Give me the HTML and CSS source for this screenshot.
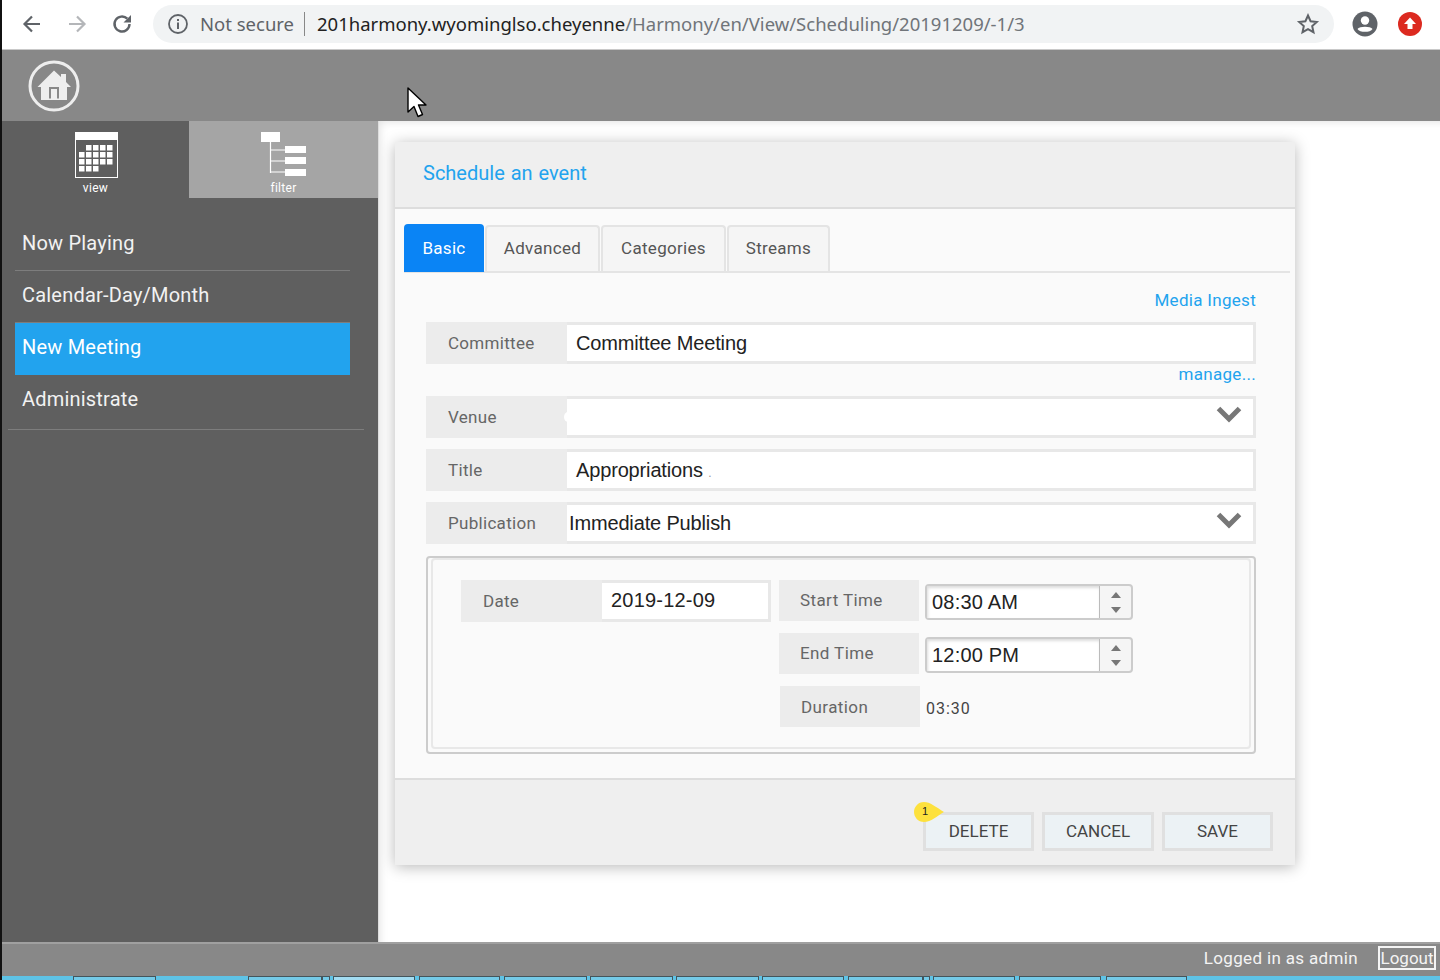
FILE: index.html
```html
<!DOCTYPE html>
<html lang="en">
<head>
<meta charset="utf-8">
<title>Schedule an event</title>
<link rel="stylesheet" href="styles.css">
</head>
<body>
<div class="screen">
  <header class="browser">
    <svg class="nav nav-back" viewBox="0 0 24 24"><path d="M20 12H5M12 4.500 4.500 12l7.500 7.500" fill="none" stroke="#5f6368" stroke-width="2.200"/></svg>
    <svg class="nav nav-forward" viewBox="0 0 24 24"><path d="M4 12h15M12 4.500l7.500 7.500-7.500 7.500" fill="none" stroke="#b4b6b9" stroke-width="2.200"/></svg>
    <svg class="nav nav-reload" viewBox="0 0 24 24"><path d="M19.500 12a7.500 7.500 0 1 1-2.200-5.300" fill="none" stroke="#5f6368" stroke-width="2.400"/><path d="M21 3v7.500h-7.500z" fill="#5f6368"/></svg>
    <div class="omnibox">
      <svg class="info" viewBox="0 0 22 22"><circle cx="11" cy="11" r="9" fill="none" stroke="#5f6368" stroke-width="1.800"/><path d="M10 9.500h2v6.500h-2zM10 6h2v2h-2z" fill="#5f6368"/></svg>
      <span class="secure">Not secure</span>
      <span class="url"><span class="url-host">201harmony.wyominglso.cheyenne</span>/Harmony/en/View/Scheduling/20191209/-1/3</span>
      <svg class="star" viewBox="0 0 24 24"><path d="m12 3.500 2.600 5.700 6.200.7-4.600 4.200 1.300 6.100L12 17.100l-5.500 3.100 1.300-6.100-4.600-4.200 6.200-.7z" fill="none" stroke="#5f6368" stroke-width="2"/></svg>
    </div>
    <svg class="avatar" viewBox="0 0 26 26"><circle cx="13" cy="13" r="12.500" fill="#5f6368"/><circle cx="13" cy="9.500" r="4.200" fill="#fff"/><path d="M5.500 18c2-3 13-3 15 0-2 3.800-13 3.800-15 0z" fill="#fff"/></svg>
    <svg class="update" viewBox="0 0 24 24"><circle cx="12" cy="12" r="12" fill="#dc2a20"/><path d="M12 5.500 18 12h-3.500v5h-5v-5H6z" fill="#fff"/></svg>
  </header>

  <div class="app">
    <div class="topbar">
      <svg class="home" viewBox="0 0 52 52"><circle cx="26" cy="26" r="24" fill="none" stroke="#eee" stroke-width="3"/><path d="M9.500 27 26 10.500l7 6.500v-3h5v8l5 5h-4v13H13V27zM21 38.500h2V29h6v9.500h2V27H21z" fill="#eee" fill-rule="evenodd"/><path d="M25 31h2v7.500h-2z" fill="#eee"/></svg>
    </div>
    <div class="main">
      <aside class="sidebar">
        <div class="side-tabs">
          <div class="side-tab">
            <svg class="ico-cal" viewBox="0 0 44 46">
              <rect x="0.500" y="0.500" width="42" height="45" fill="none" stroke="#fff"/>
              <rect x="0" y="0" width="43" height="8" fill="#fff"/>
              <g fill="#fff">
                <rect x="11" y="13" width="5.500" height="5.500"/><rect x="18" y="13" width="5.500" height="5.500"/><rect x="25" y="13" width="5.500" height="5.500"/><rect x="32" y="13" width="5.500" height="5.500"/>
                <rect x="4" y="20" width="5.500" height="5.500"/><rect x="11" y="20" width="5.500" height="5.500"/><rect x="18" y="20" width="5.500" height="5.500"/><rect x="25" y="20" width="5.500" height="5.500"/><rect x="32" y="20" width="5.500" height="5.500"/>
                <rect x="4" y="27" width="5.500" height="5.500"/><rect x="11" y="27" width="5.500" height="5.500"/><rect x="18" y="27" width="5.500" height="5.500"/><rect x="25" y="27" width="5.500" height="5.500"/><rect x="32" y="27" width="5.500" height="5.500"/>
                <rect x="4" y="34" width="5.500" height="5.500"/><rect x="11" y="34" width="5.500" height="5.500"/><rect x="18" y="34" width="5.500" height="5.500"/>
              </g>
            </svg>
            <span class="side-tab-label">view</span>
          </div>
          <div class="side-tab side-tab-active">
            <svg class="ico-tree" viewBox="0 0 46 46">
              <path d="M9.500 10v31M9.500 18H24M9.500 29H24M9.500 40H24" fill="none" stroke="#fff" stroke-width="1.200"/>
              <g fill="#fff"><rect x="0" y="0" width="19" height="10"/><rect x="24" y="14" width="21" height="7"/><rect x="24" y="25" width="21" height="7"/><rect x="24" y="37" width="21" height="7"/></g>
            </svg>
            <span class="side-tab-label">filter</span>
          </div>
        </div>
        <nav class="menu">
          <a class="menu-item">Now Playing</a>
          <a class="menu-item">Calendar-Day/Month</a>
          <a class="menu-item menu-item-active">New Meeting</a>
          <a class="menu-item menu-item-last">Administrate</a>
        </nav>
      </aside>

      <section class="content">
        <div class="dialog">
          <div class="dialog-head">Schedule an event</div>
          <div class="dialog-body">
            <div class="tabs">
              <span class="tab tab-active tab-basic">Basic</span>
              <span class="tab tab-adv">Advanced</span>
              <span class="tab tab-cat">Categories</span>
              <span class="tab tab-str">Streams</span>
            </div>
            <div class="form">
              <a class="link link-media">Media Ingest</a>
              <div class="row">
                <span class="row-label">Committee</span>
                <span class="row-field">Committee Meeting</span>
              </div>
              <a class="link link-manage">manage...</a>
              <div class="row">
                <span class="row-label row-label-venue">Venue</span>
                <span class="row-field row-field-venue"><svg class="chev" viewBox="0 0 26 18"><path d="M2.500 2.500 13 13 23.500 2.500" fill="none" stroke="#777" stroke-width="5"/></svg></span>
              </div>
              <div class="row row-gap">
                <span class="row-label">Title</span>
                <span class="row-field">Appropriations <span class="faint">.</span></span>
              </div>
              <div class="row row-gap">
                <span class="row-label">Publication</span>
                <span class="row-field row-field-tight">Immediate Publish<svg class="chev" viewBox="0 0 26 18"><path d="M2.500 2.500 13 13 23.500 2.500" fill="none" stroke="#777" stroke-width="5"/></svg></span>
              </div>
              <div class="timebox">
                <div class="timebox-inner">
                  <div class="date-row">
                    <span class="date-label">Date</span>
                    <span class="date-field">2019-12-09</span>
                  </div>
                  <div class="times">
                    <div class="time-row">
                      <span class="time-label">Start Time</span>
                      <div class="spinner">
                        <span class="spinner-value">08:30 AM</span>
                        <span class="spinner-btns"><i class="arrow-up"></i><i class="arrow-down"></i></span>
                      </div>
                    </div>
                    <div class="time-row">
                      <span class="time-label">End Time</span>
                      <div class="spinner">
                        <span class="spinner-value">12:00 PM</span>
                        <span class="spinner-btns"><i class="arrow-up"></i><i class="arrow-down"></i></span>
                      </div>
                    </div>
                    <div class="time-row time-row-duration">
                      <span class="time-label">Duration</span>
                      <span class="duration">03:30</span>
                    </div>
                  </div>
                </div>
              </div>
            </div>
          </div>
          <div class="dialog-foot">
            <button class="btn btn-delete">DELETE<span class="badge"><svg class="badge-shape" viewBox="0 0 32 22"><path d="M11 1c6 0 12 5 20 10-7 4-13 10-20 10C5 21 1 16 1 11S5 1 11 1z" fill="#fde13d"/></svg><span class="badge-num">1</span></span></button>
            <button class="btn btn-cancel">CANCEL</button>
            <button class="btn">SAVE</button>
          </div>
        </div>
      </section>
    </div>
    <footer class="statusbar">
      <span class="status-user">Logged in as admin</span>
      <span class="logout">Logout</span>
    </footer>
    <div class="taskbar">
      <i></i><i class="t"></i><i></i><i class="t"></i><i class="t"></i><i></i><i class="t t-on"></i><i></i><i class="t"></i><i></i><i class="t"></i><i></i><i class="t"></i><i></i><i class="t"></i><i></i><i class="t"></i><i></i><i class="t"></i><i class="t"></i><i></i><i class="t"></i><i></i><i class="t"></i><i></i><i class="t"></i><i></i>
    </div>
  </div>

  <svg class="cursor" viewBox="0 0 20 32"><path d="M1 1v24l6-5.500 4 10 4.500-2-4-9.500H19z" fill="#fff" stroke="#000" stroke-width="1.400" stroke-linejoin="round"/></svg>
</div>
</body>
</html>
```

FILE: styles.css
```css
* { box-sizing: border-box; }
html, body { margin: 0; padding: 0; background: #fff; }
body { font-family: "Roboto", "Liberation Sans", sans-serif; }
.screen { position: relative; width: 1440px; height: 980px; overflow: hidden; border-left: 2px solid #111; }

/* browser chrome */
.browser { height: 50px; background: #fff; border-bottom: 1px solid #c9c9c9; display: flex; align-items: center; padding-bottom: 1px; }
.nav { width: 24px; height: 24px; flex: none; }
.nav-back { margin-left: 18px; }
.nav-forward { margin-left: 21px; }
.nav-reload { margin-left: 21px; }
.omnibox { width: 1181px; height: 38px; margin-left: 19px; border-radius: 19px; background: #f1f3f4; display: flex; align-items: center; padding: 0 14px; flex: none; }
.info { width: 22px; height: 22px; flex: none; }
.secure { font-family: "Noto Sans", sans-serif; font-size: 18.500px; color: #5f6368; margin-left: 11px; width: 105px; white-space: nowrap; border-right: 1px solid #888; line-height: 24px; }
.url { font-family: "Noto Sans", sans-serif; font-size: 18.500px; color: #70757a; margin-left: 12px; white-space: nowrap; flex: 1; padding-bottom: 2px; }
.url-host { color: #222; }
.star { width: 24px; height: 24px; flex: none; }
.avatar { width: 26px; height: 26px; margin-left: 18px; flex: none; }
.update { width: 24px; height: 24px; margin-left: 20px; flex: none; }

/* app frame */
.app { display: flex; flex-direction: column; height: 930px; }
.topbar { height: 71px; background: #888; padding: 10px 0 0 26px; flex: none; }
.home { width: 52px; height: 52px; display: block; }
.main { display: flex; height: 821px; flex: none; }
.sidebar { width: 376px; flex: none; background: #5f5f5f; }
.side-tabs { display: flex; height: 77px; }
.side-tab { display: flex; flex-direction: column; align-items: center; color: #fff; width: 187px; padding-top: 11px; }
.side-tab-active { width: 189px; background: #a5a5a5; }
.ico-cal { width: 44px; height: 46px; flex: none; margin-left: 2px; }
.ico-tree { width: 46px; height: 46px; flex: none; }
.side-tab-label { font-size: 12px; line-height: 14px; margin-top: 3px; letter-spacing: .3px; }
.menu { padding: 21px 14px 0 6px; }
.menu-item { display: block; height: 52px; margin: 0 14px 0 7px; padding: 0 7px; color: #f2f2f2; font-size: 20px; line-height: 48px; letter-spacing: .2px; border-bottom: 1px solid #7d7d7d; white-space: nowrap; }
.menu-item-active { background: #22a3ee; color: #fff; border-bottom: none; }
.menu-item-last { margin: 0; padding: 0 14px; height: 55px; }

/* dialog */
.content { flex: 1; background: #fff; border-left: 1px solid #ddd; padding: 21px 0 0 16px; box-shadow: inset 6px 6px 10px -6px #ddd; }
.dialog { width: 900px; height: 723px; background: #fafafa; box-shadow: 0 2px 14px rgba(0,0,0,.28); display: flex; flex-direction: column; }
.dialog-head { height: 67px; background: #efefef; border-bottom: 2px solid #ddd; color: #22a3ee; font-size: 20px; line-height: 62px; padding-left: 28px; word-spacing: 1px; flex: none; }
.dialog-body { flex: 1; padding: 16px 5px 0 9px; }
.tabs { display: flex; height: 48px; border-bottom: 2px solid #e4e4e4; align-items: flex-end; }
.tab { height: 46px; background: #f5f5f5; border: 2px solid #e4e4e4; border-bottom: none; border-radius: 4px 4px 0 0; font-size: 17px; line-height: 43px; color: #555; text-align: center; letter-spacing: .3px; margin-right: 1px; }
.tab-basic { width: 80px; height: 48px; background: #0a84f5; border-color: #0a84f5; color: #fff; margin-bottom: -1px; line-height: 45px; }
.tab-adv { width: 115px; }
.tab-cat { width: 125px; }
.tab-str { width: 103px; }
.form { padding: 0 34px 0 22px; display: flex; flex-direction: column; }
.link { color: #22a3ee; font-size: 17px; letter-spacing: .3px; text-align: right; line-height: 24px; }
.link-media { margin-top: 16px; height: 33px; line-height: 22px; }
.link-manage { height: 32px; line-height: 20px; }
.row { display: flex; height: 42px; background: #ececec; flex: none; }
.row-gap { margin-top: 11px; }
.row-label { width: 141px; flex: none; padding-left: 22px; font-size: 17px; line-height: 43px; color: #666; letter-spacing: .3px; }
.row-label-venue { line-height: 42px; }
.row-field { flex: 1; background: #fff; border: 3px solid #e8e8e8; border-left: none; font-family: "Liberation Sans", sans-serif; font-size: 20px; line-height: 36px; color: #222; padding-left: 9px; position: relative; letter-spacing: -.15px; }
.row-field-tight { padding-left: 2px; }
.row-field-venue::before { content: ""; position: absolute; left: -3px; top: 13px; width: 8px; height: 10px; border-radius: 50%; background: #fff; }
.faint { font-size: 12px; color: #999; }
.chev { position: absolute; right: 11px; top: 7px; width: 26px; height: 18px; }
.timebox { margin-top: 12px; height: 198px; border: 2px solid #ccc; border-radius: 4px; padding: 0 3px 3px; flex: none; }
.timebox-inner { height: 191px; border: 2px solid #e8e8e8; border-radius: 4px; padding: 20px 0 0 28px; display: flex; align-items: flex-start; }
.date-row { width: 310px; height: 42px; display: flex; background: #ececec; flex: none; }
.date-label { width: 141px; flex: none; padding-left: 22px; font-size: 17px; line-height: 43px; color: #666; letter-spacing: .3px; }
.date-field { flex: 1; background: #fff; border: 3px solid #e8e8e8; border-left: none; font-family: "Liberation Sans", sans-serif; font-size: 20px; line-height: 35px; color: #222; padding-left: 9px; letter-spacing: .2px; }
.times { margin-left: 8px; display: flex; flex-direction: column; gap: 12px; }
.time-row { display: flex; align-items: flex-start; height: 41px; }
.time-label { width: 140px; height: 41px; background: #ececec; flex: none; padding-left: 21px; font-size: 17px; line-height: 41px; color: #666; letter-spacing: .4px; }
.time-row-duration .time-label { margin-left: 1px; line-height: 43px; }
.spinner { width: 208px; height: 36px; margin: 4px 0 0 6px; border: 2px solid #ccc; border-radius: 4px; display: flex; background: #f5f5f5; }
.spinner-value { width: 173px; flex: none; background: #fff; border-right: 1px solid #bbb; box-shadow: inset 1px 2px 3px #ddd; font-family: "Liberation Sans", sans-serif; font-size: 20px; line-height: 32px; color: #222; padding-left: 5px; letter-spacing: .2px; }
.spinner-btns { flex: 1; display: flex; flex-direction: column; align-items: center; justify-content: center; gap: 9px; }
.arrow-up { width: 0; height: 0; border: 5px solid transparent; border-top: none; border-bottom: 6px solid #777; }
.arrow-down { width: 0; height: 0; border: 5px solid transparent; border-bottom: none; border-top: 6px solid #777; }
.duration { margin-left: 6px; font-size: 16px; color: #444; letter-spacing: 1px; line-height: 46px; }
.dialog-foot { height: 87px; background: #efefef; border-top: 2px solid #ddd; flex: none; display: flex; justify-content: flex-end; gap: 8px; padding: 32px 22px 0 0; }
.btn { position: relative; width: 111px; height: 39px; background: #ecf2f5; border: 3px solid #e0e0e0; font-family: inherit; font-size: 17px; color: #444; padding: 0 0 2px; }
.btn-cancel { width: 112px; }
.badge { position: absolute; left: -13px; top: -14px; width: 32px; height: 22px; display: block; }
.badge-shape { width: 32px; height: 22px; display: block; }
.badge-num { position: absolute; left: 0; top: 0; width: 24px; font-family: "Liberation Sans", sans-serif; font-size: 11px; line-height: 21px; color: #222; text-align: center; }

/* status */
.statusbar { height: 34px; background: #888; border-top: 2px solid #a0a0a0; flex: none; display: flex; justify-content: flex-end; align-items: center; padding: 0 4px 5px 0; color: #f4f4f4; font-size: 17px; letter-spacing: .35px; }
.logout { margin-left: 20px; width: 58px; height: 24px; border: 2px solid #f4f4f4; line-height: 20px; text-align: center; letter-spacing: 0; }
.taskbar { height: 4px; flex: none; display: grid; grid-template-columns: 71px 83px 92px 74px 8px 3px 82px 4px 81px 4px 83px 3px 83px 3px 83px 3px 82px 4px 75px 7px 3px 82px 4px 82px 5px 81px 1fr; background: #5ec3e6; }
.taskbar i { display: block; height: 4px; background: #5ec3e6; }
.taskbar .t { background: #74cae8; border: 1px solid #44555c; border-bottom: none; }
.taskbar .t-on { background: #a2dcf2; }

.cursor { position: absolute; left: 405px; top: 87px; width: 20px; height: 32px; }
```
